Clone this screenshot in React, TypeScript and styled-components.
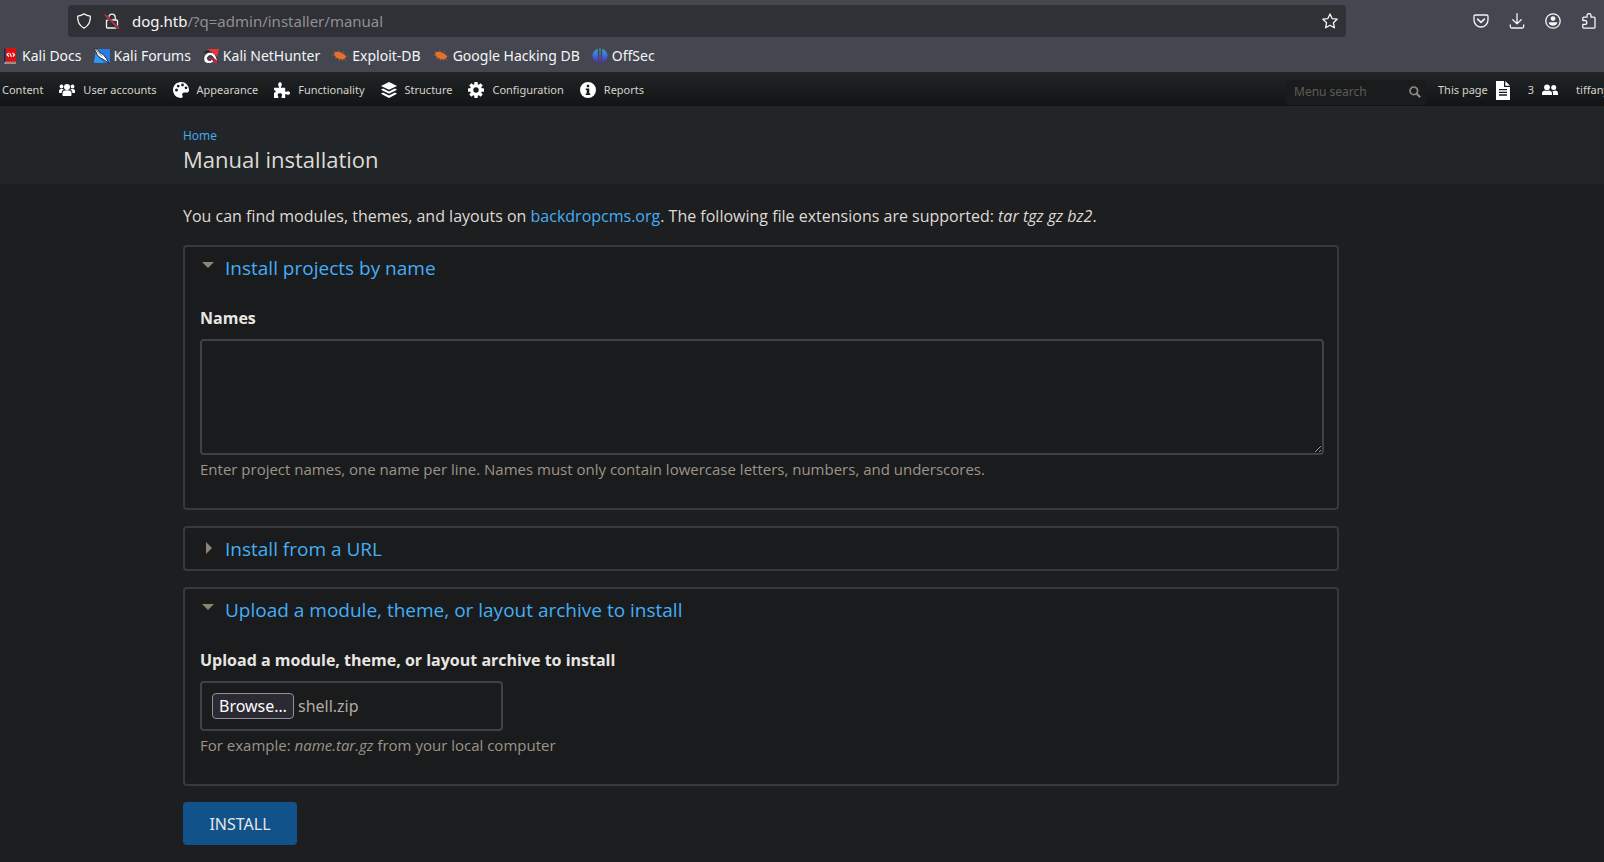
import React, { useState } from 'react';
import styled, { createGlobalStyle } from 'styled-components';

const ui = '"Noto Sans", sans-serif';
const text = '"Open Sans", sans-serif';

const Global = createGlobalStyle`
  *, *::before, *::after { box-sizing: border-box; }
  body {
    margin: 0;
    background: #1d1e20;
    color: #dedbd6;
    font: 16px/24px ${text};
    overflow-x: hidden;
  }
  a { color: #44aef5; text-decoration: none; }
`;

const Chrome = styled.header`
  background: #44474f;
  color: #f4f5f7;
  font-family: ${ui};
  font-size: 15px;
  line-height: 20px;
`;

const AddressRow = styled.div`
  display: flex;
  align-items: center;
  padding: 5px 7px 3px 68px;
`;

const AddressBar = styled.div`
  flex: 1;
  display: flex;
  align-items: center;
  gap: 12px;
  height: 32px;
  padding: 0 8px;
  border-radius: 4px;
  background: #303136;
`;

const AddressField = styled.div`
  flex: 1;
  position: relative;
  height: 20px;
`;

const AddressInput = styled.input`
  display: block;
  width: 100%;
  height: 20px;
  padding: 0;
  border: 0;
  outline: 0;
  background: none;
  color: transparent;
  font: inherit;
`;

const AddressText = styled.div`
  position: absolute;
  inset: 0;
  pointer-events: none;
  color: #8f9094;
  b { font-weight: 400; color: #f7f7f8; }
`;

const IconButton = styled.button`
  display: flex;
  padding: 0;
  border: 0;
  background: none;
  color: inherit;
`;

const ChromeTools = styled.div`
  display: flex;
  gap: 20px;
  margin-left: 127px;
`;

const Bookmarks = styled.nav`
  display: flex;
  gap: 12px;
  height: 32px;
  padding: 0 2px;
  font-size: 14px;
`;

const Bookmark = styled.a`
  display: flex;
  align-items: center;
  gap: 4px;
  height: 32px;
  color: inherit;
`;

const AdminBar = styled.nav`
  display: flex;
  align-items: center;
  justify-content: space-between;
  height: 34px;
  padding-top: 2px;
  overflow: hidden;
  background: linear-gradient(#212527, #121414);
  color: #d6d3cd;
  font: 11px/16px ${ui};
  white-space: nowrap;
`;

const AdminGroup = styled.div`
  display: flex;
  align-items: center;
  gap: 16px;
  padding-left: 2px;
`;

const AdminLink = styled.a`
  display: flex;
  align-items: center;
  gap: 8px;
  color: inherit;
  svg { color: #fff; }
`;

const AdminRight = styled.div`
  flex: none;
  display: flex;
  align-items: center;
  width: 318px;
`;

const Search = styled.form`
  display: flex;
  align-items: center;
  width: 140px;
  height: 25px;
  margin: 4px 12px 0 0;
  padding: 0 5px 0 8px;
  background: #191b1c;
  color: #8e8b86;
`;

const SearchInput = styled.input`
  flex: 1;
  min-width: 0;
  padding: 0;
  border: 0;
  outline: 0;
  background: none;
  color: inherit;
  font: 12px/16px ${ui};
  &::placeholder { color: #5e5c59; opacity: 1; }
`;

const AccountLinks = styled.div`
  display: flex;
  gap: 18px;
`;

const Heading = styled.div`
  height: 78px;
  padding: 20px 265px 0 183px;
  background: #212527;
`;

const Crumb = styled.a`
  display: block;
  font-size: 12px;
  line-height: 20px;
`;

const Title = styled.h1`
  margin: 0;
  font-size: 22px;
  line-height: 26px;
  font-weight: 400;
`;

const Main = styled.main`
  padding: 20px 265px 17px 183px;
`;

const Intro = styled.p`
  margin: 0 0 17px;
`;

const Panel = styled.section`
  margin-bottom: 16px;
  padding: 0 13px 0 15px;
  border: 2px solid #38393b;
  border-radius: 4px;
  background: #1a1b1d;
`;

const Legend = styled.h2`
  margin: 0;
  font-size: 19px;
  line-height: 24px;
  font-weight: 400;
`;

const Toggle = styled.button`
  display: flex;
  align-items: center;
  gap: 7px;
  width: 100%;
  height: 41px;
  padding: 0;
  border: 0;
  background: none;
  color: #44aef5;
  font: inherit;
  text-align: left;
`;

const PanelBody = styled.div`
  padding: 18px 0 27px;
`;

const Label = styled.label`
  display: block;
  margin-bottom: 9px;
  color: #e8e6e3;
  font-weight: 700;
`;

const TextArea = styled.textarea`
  display: block;
  width: 100%;
  height: 116px;
  padding: 10px;
  border: 2px solid #3c4443;
  border-radius: 4px;
  outline: 0;
  background: #1a1b1d;
  color: inherit;
  font: inherit;
  resize: vertical;
`;

const Help = styled.p`
  margin: 2px 0 0;
  color: #9d9488;
  font-size: 15px;
  line-height: 24px;
`;

const FileBox = styled.div`
  position: relative;
  display: flex;
  align-items: center;
  gap: 4px;
  width: 303px;
  height: 50px;
  padding: 0 10px;
  border: 2px solid #3c4443;
  border-radius: 4px;
  color: #b2aca2;
  font-family: ${ui};
`;

const FileInput = styled.input`
  position: absolute;
  inset: 0;
  width: 100%;
  opacity: 0;
`;

const Browse = styled.span`
  padding: 0 6px;
  border: 1px solid #8f8f9d;
  border-radius: 4px;
  background: #2b2a33;
  color: #fbfbfe;
`;

const Submit = styled.button`
  display: block;
  min-width: 114px;
  height: 43px;
  padding: 0 24px;
  border: 0;
  border-radius: 4px;
  background: #11528a;
  color: #e8e6e3;
  font: 16px/24px ${ui};
`;

type Drawing = { children: React.ReactNode; w?: number; h?: number; box?: string };

const Line = ({ children, w = 16, h = 16, box = '0 0 16 16' }: Drawing) => (
  <svg width={w} height={h} viewBox={box} fill="none" stroke="currentColor" strokeWidth="1.3" strokeLinecap="round" strokeLinejoin="round" aria-hidden="true">{children}</svg>
);

const Solid = ({ children, w = 16, h = 16, box = '0 0 16 16' }: Drawing) => (
  <svg width={w} height={h} viewBox={box} fill="currentColor" aria-hidden="true">{children}</svg>
);

const Shield = () => <Line><path d="M8 .9c2 1.3 4 2 6.300 2.200.3 5-1.600 9.600-6.300 12C3.300 12.700 1.400 8.100 1.700 3.100 4 2.900 6 2.200 8 .9z" /></Line>;
const Lock = () => (
  <Line>
    <path d="M4.800 7V4.300a3.200 3.200 0 0 1 6.400 0V7M3.500 7h9c.6 0 1 .4 1 1v6c0 .6-.4 1-1 1h-9c-.6 0-1-.4-1-1V8c0-.6.4-1 1-1z" />
    <path d="M1.500 2.500l13 13" stroke="#303136" strokeWidth="3" />
    <path d="M1.200 2l13.300 13.300" stroke="#e22850" strokeWidth="1.500" />
  </Line>
);
const Star = () => <Line><path d="M8 .9l2.100 4.700 5 .6-3.700 3.500 1 5.100L8 12.300l-4.400 2.500 1-5.100L.9 6.200l5-.6z" /></Line>;
const Pocket = () => <Line><path d="M2.300 2h11.400c.8 0 1.300.5 1.300 1.300V7a7 7 0 0 1-14 0V3.300C1 2.500 1.500 2 2.300 2z" /><path d="M4.600 6.200L8 9.400l3.400-3.200" strokeWidth="1.600" /></Line>;
const Download = () => <Line><path d="M8 .7v10M3.800 6.700L8 10.900l4.200-4.200M1.300 11.800v1.700c0 1 .6 1.500 1.500 1.500h10.400c.9 0 1.500-.5 1.500-1.500v-1.700" /></Line>;
const Account = () => <Line><circle cx="8" cy="8" r="7.200" /><circle cx="8" cy="5.600" r="2.400" fill="currentColor" stroke="none" /><path d="M3.700 9.200h8.600c0 2.200-1.900 3.600-4.300 3.600s-4.300-1.400-4.300-3.600z" fill="currentColor" stroke="none" /></Line>;
const Extension = () => <Line><path d="M1.800 7.500V5.200c0-.6.400-1 1-1h3.200V2.600a2 2 0 0 1 4 0v1.600h3c.6 0 1 .4 1 1v9c0 .5-.4.900-1 .9H2.800c-.6 0-1-.4-1-1v-2.800h2.100a1.900 1.900 0 0 0 0-3.800z" /></Line>;

const Docs = () => (
  <Solid>
    <path d="M3.500 0H14v13.500H3.500z" fill="#dc1010" /><path d="M2 1l1.500-1v14L2 15.500z" fill="#182b52" />
    <path d="M2 15.500L3.500 13.500H14V15.500z" fill="#e9dede" /><path d="M3.500 13.500H14v1H3.500z" fill="#8c1111" />
    <path d="M6.700 4.800L5 6.800l2 1.700M7.900 5.200l1.500 3.500M10.500 5l2 1.700-1.700 2" fill="none" stroke="#fff" strokeWidth="1.200" />
  </Solid>
);
const Forums = () => (
  <Solid>
    <path d="M2 1h14v14H0z" fill="#287be8" />
    <path d="M0 14.500L1.500 6l5 5 3 4z" fill="#2c98f4" />
    <path d="M0 0l3.500 1.500 2.200 3 3.800 2.300 2.800 3.700 2.700 4.800-4.500-3.100L6 9.500 3.200 7 1.800 3.500z" fill="#fff" stroke="#202126" strokeWidth=".9" />
    <path d="M2 1.500l3 4.200 3.500 2.500" fill="none" stroke="#60646c" strokeWidth=".7" />
  </Solid>
);
const NetHunter = () => (
  <Solid>
    <path d="M4 1h12l-2 8z" fill="#f0323c" />
    <path d="M4 12l9-4 1.500 7H6z" fill="#d51f45" />
    <path d="M1.300 13.500C-.5 9 2.500 4.300 7 4.300c3.500 0 5.500 2 6 4.200l2.200 5.700-4.500-3.900C9.800 8.200 8.200 7 6.300 7.700 4.100 8.500 3.900 10.700 5 11.900c1.200 1.200 3 .8 3.800-.5l2.200 1.800C8.800 16 3.500 16.500 1.300 13.500z" fill="#fff" stroke="#26272b" strokeWidth=".8" />
    <path d="M0 4.500L4.500 2l3 1.300L3.500 5z" fill="#26272b" />
  </Solid>
);
const Bug = () => (
  <Solid>
    <path d="M1.500 3l2.500 2M0 7h4M3 11l3-2M7 13l1-3M11 13l-1-3M12 3l-2 3M15.500 8l-3 .5M14.500 12.500l-3-2.500M6.500 2l1 3" stroke="#a3603f" strokeWidth=".8" />
    <path d="M2 5C4.500 3 8 3.500 10.500 5.700l2.200.9 1.300 2.400-2 1.900c-3 .9-7 0-9-2.600z" fill="#e4702c" />
  </Solid>
);
const OffSec = () => (
  <Solid>
    <defs><linearGradient id="offsec" gradientUnits="userSpaceOnUse" x1="0" y1="0" x2="0" y2="16"><stop stopColor="#3ca3bd" /><stop offset=".5" stopColor="#4269df" /><stop offset="1" stopColor="#6217bd" /></linearGradient></defs>
    <path d="M5.800.9v13.200C3 13.300.5 11 .5 7.500S3 1.600 5.800.9zM7.400.2h1.200v15H7.400zM10.200.9c2.800.7 5.300 3.100 5.300 6.600s-2.500 5.800-5.300 6.600z" fill="url(#offsec)" />
  </Solid>
);

const Users = () => <Solid><circle cx="8" cy="5" r="3" /><circle cx="2.500" cy="4.500" r="1.900" /><circle cx="13.500" cy="4.500" r="1.900" /><path d="M3.500 13v-2c0-2 1.500-2.700 4.500-2.700s4.500.7 4.500 2.700v2c0 .6-.4 1-1 1h-7c-.6 0-1-.4-1-1zM0 11V9c0-1.500 1-2 3.500-2 .6 0 1 .2 1.400.6C3.300 8.300 2.700 9.300 2.600 11zM16 11V9c0-1.500-1-2-3.500-2-.6 0-1 .2-1.400.6 1.600.7 2.200 1.700 2.300 3.400z" /></Solid>;
const Palette = () => <Solid><path fillRule="evenodd" d="M8 0C3.500 0 0 3.600 0 8s3.600 8 8 8c1.600 0 2-1.300 1.400-2.500-.7-1.500.2-3 1.900-3H14c1.300 0 2-1.200 2-2.600C16 3.400 12.400 0 8 0zM3.500 9.500a1.500 1.500 0 1 1 0-3 1.500 1.500 0 0 1 0 3zM5.200 5.500a1.400 1.400 0 1 1 0-2.800 1.400 1.400 0 0 1 0 2.800zM9.500 4.400a1.400 1.400 0 1 1 0-2.800 1.400 1.400 0 0 1 0 2.800zM13 7.200a1.400 1.400 0 1 1 0-2.800 1.400 1.400 0 0 1 0 2.800z" /></Solid>;
const Puzzle = () => <Solid><path d="M0 5.800h4.600c.6 0 .7-.5.4-1C3.500 2.500 4.300.2 6 .2s2.500 2.300 1 4.600c-.3.500-.2 1 .4 1h3.800v3.500c0 .7.500.8 1 .500 2-1.300 3.800-.5 3.800 1.200s-1.800 2.500-3.800 1.200c-.5-.3-1-.2-1 .5V16H7.600v-1.300c0-.8.500-1 .5-1.800 0-.9-.9-1.600-2.200-1.600s-2.200.7-2.200 1.600c0 .8.600 1 .6 1.800V16H0v-5.300c1.300 0 1.600-.5 1.600-1.200S1.300 8.300 0 8.300z" /></Solid>;
const Layers = () => <Solid><path d="M8 0l8 3.900-8 3.900-8-3.900zM2 6.500l6 3 6-3 2 1.300-8 4-8-4zM2 10.500l6 3 6-3 2 1.300L8 16l-8-4.200z" /></Solid>;
const Gear = () => (
  <Solid>
    <g>{[0, 45, 90, 135].map((a) => <rect key={a} x="6.300" y="0" width="3.400" height="16" rx=".4" transform={`rotate(${a} 8 8)`} />)}</g>
    <circle cx="8" cy="8" r="6" /><circle cx="8" cy="8" r="2.700" fill="#191c1d" />
  </Solid>
);
const Info = () => <Solid><path fillRule="evenodd" d="M8 0a8 8 0 1 1 0 16A8 8 0 0 1 8 0zM6.800 2.800v2.400h2.400V2.800zM5.700 6.500v1.400h1v3.600h-1V13h4.600v-1.500h-1v-5z" /></Solid>;
const Doc = () => <Solid w={14} h={19} box="0 0 14 19"><path fillRule="evenodd" d="M0 0h8v6h6v13H0zM3 8v1.300h8V8zm0 2.700V12h8v-1.300zm0 2.600v1.400h8v-1.400z" /><path d="M9.300 0L14 4.800H9.300z" /></Solid>;
const Pair = () => <Solid><circle cx="5" cy="5.300" r="2.900" /><circle cx="11.700" cy="5.500" r="2.500" /><path d="M0 13v-1.600C0 9.400 1.500 8.600 3.300 8.500c1 .6 2.400.6 3.400 0 1.800.1 3.300.9 3.300 2.900V13zM11 13v-2c0-1-.3-1.700-.8-2.300.9.500 2.100.5 3-.1 1.800.1 2.800 1.100 2.800 2.800V13z" /></Solid>;
const Magnifier = () => <Solid w={12} h={12} box="0 0 12 12"><circle cx="4.800" cy="4.800" r="3.800" fill="none" stroke="currentColor" strokeWidth="1.700" /><path d="M7.500 7.500l3.700 3.700" stroke="currentColor" strokeWidth="2.100" /></Solid>;
const Arrow = ({ open }: { open: boolean }) => (
  <svg width="18" height="16" viewBox="0 0 18 16" fill="#8e8375" aria-hidden="true"><path d={open ? 'M2 2h12L8 8z' : 'M6 1v12l6-6z'} /></svg>
);

const bookmarks = [
  { name: 'Kali Docs', icon: <Docs /> },
  { name: 'Kali Forums', icon: <Forums /> },
  { name: 'Kali NetHunter', icon: <NetHunter /> },
  { name: 'Exploit-DB', icon: <Bug /> },
  { name: 'Google Hacking DB', icon: <Bug /> },
  { name: 'OffSec', icon: <OffSec /> },
];

const adminLinks = [
  { name: 'Content', icon: null },
  { name: 'User accounts', icon: <Users /> },
  { name: 'Appearance', icon: <Palette /> },
  { name: 'Functionality', icon: <Puzzle /> },
  { name: 'Structure', icon: <Layers /> },
  { name: 'Configuration', icon: <Gear /> },
  { name: 'Reports', icon: <Info /> },
];

function Collapsible({ title, initial, children }: { title: string; initial: boolean; children?: React.ReactNode }) {
  const [open, setOpen] = useState(initial);
  return (
    <Panel>
      <Legend>
        <Toggle type="button" aria-expanded={open} onClick={() => setOpen(!open)}><Arrow open={open} />{title}</Toggle>
      </Legend>
      {open && children && <PanelBody>{children}</PanelBody>}
    </Panel>
  );
}

export default function App() {
  const [file, setFile] = useState('shell.zip');
  return (
    <>
      <Global />
      <Chrome>
        <AddressRow>
          <AddressBar>
            <IconButton aria-label="Tracking protection"><Shield /></IconButton>
            <IconButton aria-label="Connection not secure"><Lock /></IconButton>
            <AddressField>
              <AddressInput aria-label="Address" readOnly />
              <AddressText><b>dog.htb</b>/?q=admin/installer/manual</AddressText>
            </AddressField>
            <IconButton aria-label="Bookmark this page"><Star /></IconButton>
          </AddressBar>
          <ChromeTools>
            <IconButton aria-label="Pocket"><Pocket /></IconButton>
            <IconButton aria-label="Downloads"><Download /></IconButton>
            <IconButton aria-label="Account"><Account /></IconButton>
            <IconButton aria-label="Extensions"><Extension /></IconButton>
          </ChromeTools>
        </AddressRow>
        <Bookmarks aria-label="Bookmarks">
          {bookmarks.map((b) => <Bookmark href="#" key={b.name}>{b.icon}{b.name}</Bookmark>)}
        </Bookmarks>
      </Chrome>
      <AdminBar aria-label="Administration">
        <AdminGroup>
          {adminLinks.map((l) => <AdminLink href="#" key={l.name}>{l.icon}{l.name}</AdminLink>)}
        </AdminGroup>
        <AdminRight>
          <Search>
            <SearchInput aria-label="Menu search" placeholder="Menu search" />
            <Magnifier />
          </Search>
          <AccountLinks>
            <AdminLink href="#">This page<Doc /></AdminLink>
            <AdminLink href="#">3<Pair /></AdminLink>
            <AdminLink href="#">tiffany</AdminLink>
          </AccountLinks>
        </AdminRight>
      </AdminBar>
      <Heading>
        <Crumb href="#">Home</Crumb>
        <Title>Manual installation</Title>
      </Heading>
      <Main>
        <Intro>
          You can find modules, themes, and layouts on <a href="#">backdropcms.org</a>. The following file extensions are supported: <em>tar tgz gz bz2</em>.
        </Intro>
        <Collapsible title="Install projects by name" initial>
          <Label htmlFor="names">Names</Label>
          <TextArea id="names" />
          <Help>Enter project names, one name per line. Names must only contain lowercase letters, numbers, and underscores.</Help>
        </Collapsible>
        <Collapsible title="Install from a URL" initial={false} />
        <Collapsible title="Upload a module, theme, or layout archive to install" initial>
          <Label htmlFor="archive">Upload a module, theme, or layout archive to install</Label>
          <FileBox>
            <Browse>Browse…</Browse>{file}
            <FileInput id="archive" type="file" onChange={(e) => setFile(e.target.files?.[0]?.name ?? 'No file selected.')} />
          </FileBox>
          <Help>For example: <em>name.tar.gz</em> from your local computer</Help>
        </Collapsible>
        <Submit type="submit">INSTALL</Submit>
      </Main>
    </>
  );
}
